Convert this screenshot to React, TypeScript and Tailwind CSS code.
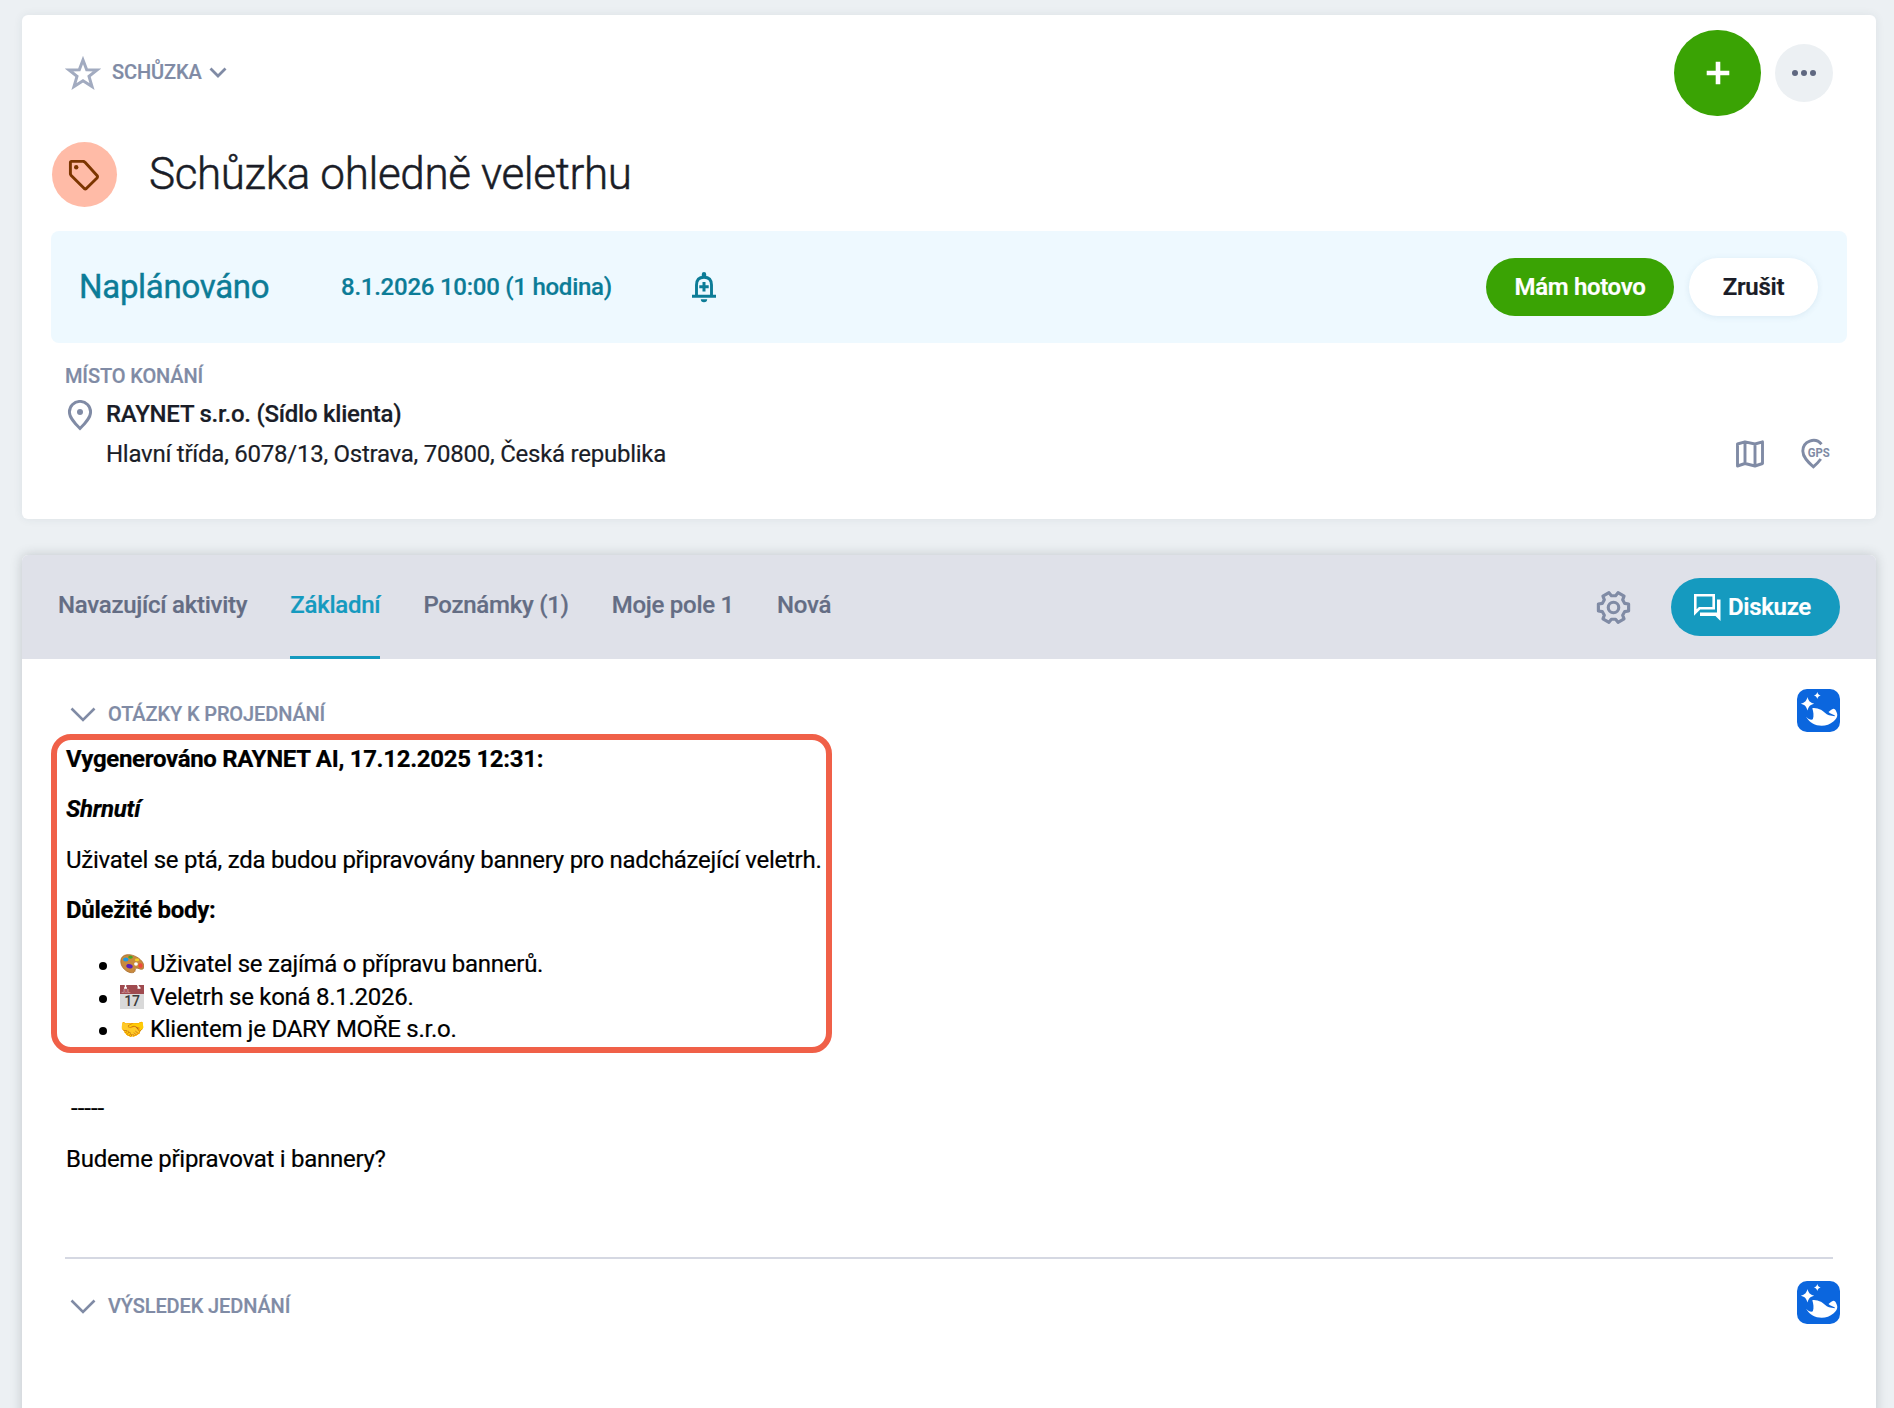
import React from "react";

const LABEL = "text-[20px] leading-6 font-medium tracking-[-0.12px] text-[#808ba5]";

const GEAR = Array.from({ length: 6 }, (_, i) =>
  [[-20, 8.4], [-13, 10.9], [13, 10.9], [20, 8.4]].map(([offset, radius]) => {
    const a = ((i * 60 + offset) * Math.PI) / 180;
    return `${(12 + radius * Math.cos(a)).toFixed(2)},${(12 + radius * Math.sin(a)).toFixed(2)}`;
  }).join(" ")
).join(" ");

function Assistant() {
  return (
    <svg width="43" height="43" viewBox="0 0 43 43" className="shrink-0">
      <rect width="43" height="43" rx="10" fill="#0b66de" />
      <path d="M10.500 8c1.100 4 2.400 5.500 6.700 6.700-4.300 1.200-5.600 2.700-6.700 6.800-1.100-4.100-2.400-5.600-6.700-6.800 4.300-1.200 5.600-2.700 6.700-6.700zM20.300 3c.5 2 1.300 2.900 3.400 3.500-2.100.6-2.900 1.500-3.400 3.500-.5-2-1.300-2.900-3.400-3.500 2.100-.6 2.900-1.500 3.400-3.500z" fill="#fff" />
      <path d="M15.300 19.200c1.700-.8 6.200.2 8.700 1.600 3 1.700 4.800 4.800 8 5.400 1.900.4 3.900.5 5.700 1l.2-.8c-1.900-.6-4.400-1.600-6.400-3.300 1.700-1.300 3.200-3.300 5-3.400 1.700-.1 3.200 3.100 3.700 5.300.6 3-1.200 5.200-3.800 7.400-3.300 2.800-7.300 4.300-11.700 4.300-6.600-.1-12-3-15.700-9 2.500 2.500 5 3.600 6.800 2.600 1.300-3.500.6-7.500-.5-11.100z" fill="#fff" />
    </svg>
  );
}

function Palette() {
  return (
    <svg width="24" height="20" viewBox="0 0 24 22" preserveAspectRatio="none">
      <path d="M7 .8C12 .3 18 3 21.500 7.500c3 4 3.300 8.500.8 9.200-2.500.7-4-1.800-6-1-2 .8-.3 3.300-2.300 4.400-3 1.500-8-.6-11-5C-.2 10.700-.8 1.800 7 .8z" fill="#c98a3d" stroke="#a5692a" strokeWidth=".8" />
      <ellipse cx="5.800" cy="6" rx="2.700" ry="2.200" fill="#1e9be0" />
      <ellipse cx="10.500" cy="3.600" rx="2.300" ry="1.600" fill="#45a526" />
      <ellipse cx="17" cy="6.500" rx="2.200" ry="1.600" fill="#f2d022" />
      <ellipse cx="9.500" cy="13.500" rx="3.300" ry="2.300" fill="#5a1fb8" transform="rotate(20 9.500 13.500)" />
      <ellipse cx="20.500" cy="12.800" rx="2.200" ry="2.600" fill="#ee4a3c" />
      <circle cx="16" cy="11" r="1.900" fill="#fff" />
    </svg>
  );
}

function Calendar() {
  return (
    <svg width="24" height="24" viewBox="0 0 24 24">
      <rect width="24" height="24" fill="#d9d9d9" />
      <rect width="24" height="9" fill="#9f4a4f" />
      <path d="M5.500 0v3.500M4 3h3M17.500 0l2 3M17.500 3h3" stroke="#fff" strokeWidth="1.400" />
      <text x="1.500" y="8.300" fontSize="5.500" fill="#d9a9ab">JUL</text>
      <text x="12" y="21" fontSize="14" fontWeight="500" textAnchor="middle" fill="#3c3c3c">17</text>
    </svg>
  );
}

function SectionHead({ title }: { title: string }) {
  return (
    <div className="flex h-[43px] items-center justify-between pl-[5px]">
      <div className="flex items-center">
        <svg width="26" height="16" viewBox="0 0 26 16" fill="none" stroke="#808ba5" strokeWidth="2.600" className="mt-[8px]">
          <path d="M1.500 1.500 13 13 24.500 1.500" />
        </svg>
        <span className={LABEL + " ml-3 mt-[6px]"}>{title}</span>
      </div>
      <Assistant />
    </div>
  );
}

const POINTS = [
  { icon: <Palette />, text: "Uživatel se zajímá o přípravu bannerů." },
  { icon: <Calendar />, text: "Veletrh se koná 8.1.2026." },
  { icon: "🤝", text: "Klientem je DARY MOŘE s.r.o." },
];

export default function App() {
  return (
    <div className="h-[1408px] overflow-hidden bg-[#ecf0f3] pl-[22px] pr-[18px] pt-[15px] font-['Roboto',sans-serif] text-[#1a1d27] [-webkit-text-stroke:0.2px]">
      <section className="h-[504px] rounded-md bg-white px-[29px] pt-[15px] shadow-[0_0_10px_rgba(40,60,80,0.08)]">
        <div className="flex h-[86px] items-center justify-between pl-[14px] pr-[14px]">
          <div className="-mt-[2px] flex items-center">
            <svg width="36" height="34" viewBox="0 0 36 34" fill="none" stroke="#a2abc0" strokeWidth="3" className="mt-[2px]">
              <path d="M18 4 21.700 13.800 32 14 24 20.400 27 30.500 18 24.700 9 30.500 12 20.400 4 14 14.300 13.800Z" />
            </svg>
            <span className={LABEL + " ml-[11px]"}>SCHŮZKA</span>
            <svg width="18" height="12" viewBox="0 0 18 12" fill="none" stroke="#808ba5" strokeWidth="2.800" className="ml-[7px] mt-[2px]">
              <path d="M1.500 1.500 9 9 16.500 1.500" />
            </svg>
          </div>
          <div className="flex items-center gap-[14px]">
            <div className="flex h-[86px] w-[87px] items-center justify-center rounded-full bg-[#3aa304]">
              <svg width="24" height="24" viewBox="0 0 24 24" stroke="#fff" strokeWidth="4.600" className="-mt-px"><path d="M12 .7v22.600M.7 12h22.600" /></svg>
            </div>
            <div className="flex h-[58px] w-[58px] items-center justify-center gap-[3px] rounded-full bg-[#ecf0f3]">
              <i className="h-[6px] w-[6px] rounded-full bg-[#5f6880]" />
              <i className="h-[6px] w-[6px] rounded-full bg-[#5f6880]" />
              <i className="h-[6px] w-[6px] rounded-full bg-[#5f6880]" />
            </div>
          </div>
        </div>
        <div className="mt-[26px] flex h-[65px] items-center pl-[1px]">
          <div className="flex h-[65px] w-[65px] items-center justify-center rounded-full bg-[#ffbba7]">
            <svg width="32" height="32" viewBox="0 0 32 32" fill="none" stroke="#7c3500" strokeWidth="2.900" strokeLinejoin="round" className="-ml-px">
              <path d="M3.500 2.400H15.500L17 3.200 29 16.500Q30 17.800 29 19L18.300 29.500Q17.300 30.300 16.300 29.500L3.200 16.500 2.400 15V3.500Q2.400 2.400 3.500 2.400Z" />
              <circle cx="8.200" cy="8.200" r="2.200" fill="#7c3500" stroke="none" />
            </svg>
          </div>
          <h1 className="-mt-[2px] ml-[32px] text-[44px] font-[350] leading-[52px] tracking-[-0.38px] [-webkit-text-stroke:0.5px]">Schůzka ohledně veletrhu</h1>
        </div>
        <div className="mt-6 flex h-[112px] items-center rounded-lg bg-[#eef9ff] pl-[28px] pr-[29px] text-[#0c7c97]">
          <span className="w-[262px] text-[33px] leading-10 tracking-[-0.3px] [-webkit-text-stroke:0.4px]">Naplánováno</span>
          <span className="w-[350px] text-[24px] font-medium tracking-[-0.25px]">8.1.2026 10:00 (1 hodina)</span>
          <svg width="26" height="32" viewBox="0 0 26 32" fill="none" stroke="#0c7c97" strokeWidth="2.900">
            <path d="M1 25.200h24M5.500 25V14q0-7.800 7.500-7.800t7.500 7.800v11" />
            <path d="M13 11v9.400M8.300 15.700h9.400" strokeWidth="3" />
            <path d="M9.800 28.200h6.400a3.200 3 0 0 1-6.400 0zM10.800 6V3.200a2.200 2.200 0 0 1 4.400 0V6z" fill="#0c7c97" stroke="none" />
          </svg>
          <button className="ml-auto h-[58px] w-[188px] rounded-full bg-[#3aa304] text-[24px] font-semibold tracking-[-0.35px] text-white">Mám hotovo</button>
          <button className="ml-[15px] h-[58px] w-[129px] rounded-full bg-white text-[24px] font-semibold tracking-[-0.3px] text-[#1a1d27] shadow-[0_1px_6px_rgba(40,100,150,0.1)]">Zrušit</button>
        </div>
        <div className="px-[14px] pt-[21px]">
          <div className={LABEL}>MÍSTO KONÁNÍ</div>
          <div className="mt-[6px] flex">
            <svg width="28" height="32" viewBox="0 0 28 32" fill="none" stroke="#808ba5" strokeWidth="2.900" className="ml-[1px] mt-[6px]">
              <path d="M14 28.500C9 23.500 3.400 18 3.400 12a10.600 10.600 0 0 1 21.200 0C24.600 18 19 23.500 14 28.500z" />
              <circle cx="14" cy="12" r="3" fill="#808ba5" stroke="none" />
            </svg>
            <div className="ml-[12px] text-[24px] leading-10 tracking-[-0.25px]">
              <div className="font-medium">RAYNET s.r.o. (Sídlo klienta)</div>
              <div>Hlavní třída, 6078/13, Ostrava, 70800, Česká republika</div>
            </div>
            <div className="ml-auto mr-px mt-[44px] flex gap-[35px]">
              <svg width="30" height="30" viewBox="0 0 30 30" fill="none" stroke="#808ba5" strokeWidth="2.900" strokeLinejoin="round" className="mt-px">
                <path d="M2.500 5 10 2.800 20 5 27.500 2.800V24.500L20 27 10 24.500 2.500 27ZM10 2.800v22M20 5v22" />
              </svg>
              <svg width="32" height="32" viewBox="0 0 32 32" fill="none" stroke="#808ba5" strokeWidth="2.900">
                <path d="M21.500 6.200A10.600 10.600 0 0 0 2.800 13C2.800 19 8 24 13.300 28.800 16 26.500 18.700 24 20.800 21" />
                <text x="7.700" y="18.800" fontSize="12.500" fontWeight="700" fill="#808ba5" stroke="none" textLength="22" lengthAdjust="spacingAndGlyphs">GPS</text>
              </svg>
            </div>
          </div>
        </div>
      </section>

      <section className="mt-9 h-[900px] rounded-t-md bg-white shadow-[0_0_12px_rgba(40,50,60,0.22)]">
        <header className="flex h-[104px] items-center rounded-t-md bg-[#dfe1e9] pl-9 pr-9">
          <nav className="flex h-full gap-[43px] text-[24px] font-medium leading-[101px] tracking-[-0.26px] text-[#646d84]">
            <span>Navazující aktivity</span>
            <span className="h-[104px] border-b-[3px] border-[#159abf] text-[#159abf]">Základní</span>
            <span>Poznámky (1)</span>
            <span>Moje pole 1</span>
            <span>Nová</span>
          </nav>
          <svg width="35" height="35" viewBox="-.3 -.3 24.600 24.600" fill="none" stroke="#808ba5" strokeWidth="2.200" strokeLinejoin="round" className="ml-auto">
            <polygon points={GEAR} />
            <circle cx="12" cy="12" r="3.700" />
          </svg>
          <button className="ml-[40px] flex h-[58px] w-[169px] items-center rounded-full bg-[#159abf] pl-[23px] text-[24px] font-semibold tracking-[-0.32px] text-white">
            <svg width="27" height="27" viewBox="0 0 27 27" fill="none">
              <path d="M1.300 1.300h18.400v13H5.500L1.300 18.500z" stroke="#fff" strokeWidth="2.600" />
              <path d="M23 5.500h3.500V27l-5-5H6v-3.500h17z" fill="#fff" />
            </svg>
            <span className="ml-[7px]">Diskuze</span>
          </button>
        </header>
        <div className="pl-[43px] pr-9 pt-[30px]">
          <SectionHead title="OTÁZKY K PROJEDNÁNÍ" />
          <div className="-ml-[14px] mt-[2px] h-[319px] w-[781px] rounded-[20px] border-[6px] border-[#f06048] pl-[9px] pt-[3px] text-[24px] leading-8 tracking-[-0.27px] text-black">
            <p className="font-bold tracking-[-0.3px]">Vygenerováno RAYNET AI, 17.12.2025 12:31:</p>
            <p className="mt-[18px] font-bold italic">Shrnutí</p>
            <p className="mt-[19px] whitespace-nowrap">Uživatel se ptá, zda budou připravovány bannery pro nadcházející veletrh.</p>
            <p className="mt-[18px] font-bold">Důležité body:</p>
            <ul className="mt-[22px]">
              {POINTS.map(({ icon, text }) => (
                <li key={text} className="flex h-[32.500px] items-center">
                  <i className="ml-[33px] mt-1 h-2 w-2 rounded-full bg-black" />
                  <span className="ml-[13px] w-[30px] text-[20px]">{icon}</span>
                  <span>{text}</span>
                </li>
              ))}
            </ul>
          </div>
          <div className="pl-[1px] text-[24px] leading-8 tracking-[-0.27px] text-black">
            <p className="mt-[39px] pl-[5px] tracking-normal">-----</p>
            <p className="mt-[19px]">Budeme připravovat i bannery?</p>
          </div>
          <hr className="mr-[7px] mt-[82px] border-t-2 border-[#d5d8e2]" />
          <div className="mt-[22px]"><SectionHead title="VÝSLEDEK JEDNÁNÍ" /></div>
        </div>
      </section>
    </div>
  );
}
